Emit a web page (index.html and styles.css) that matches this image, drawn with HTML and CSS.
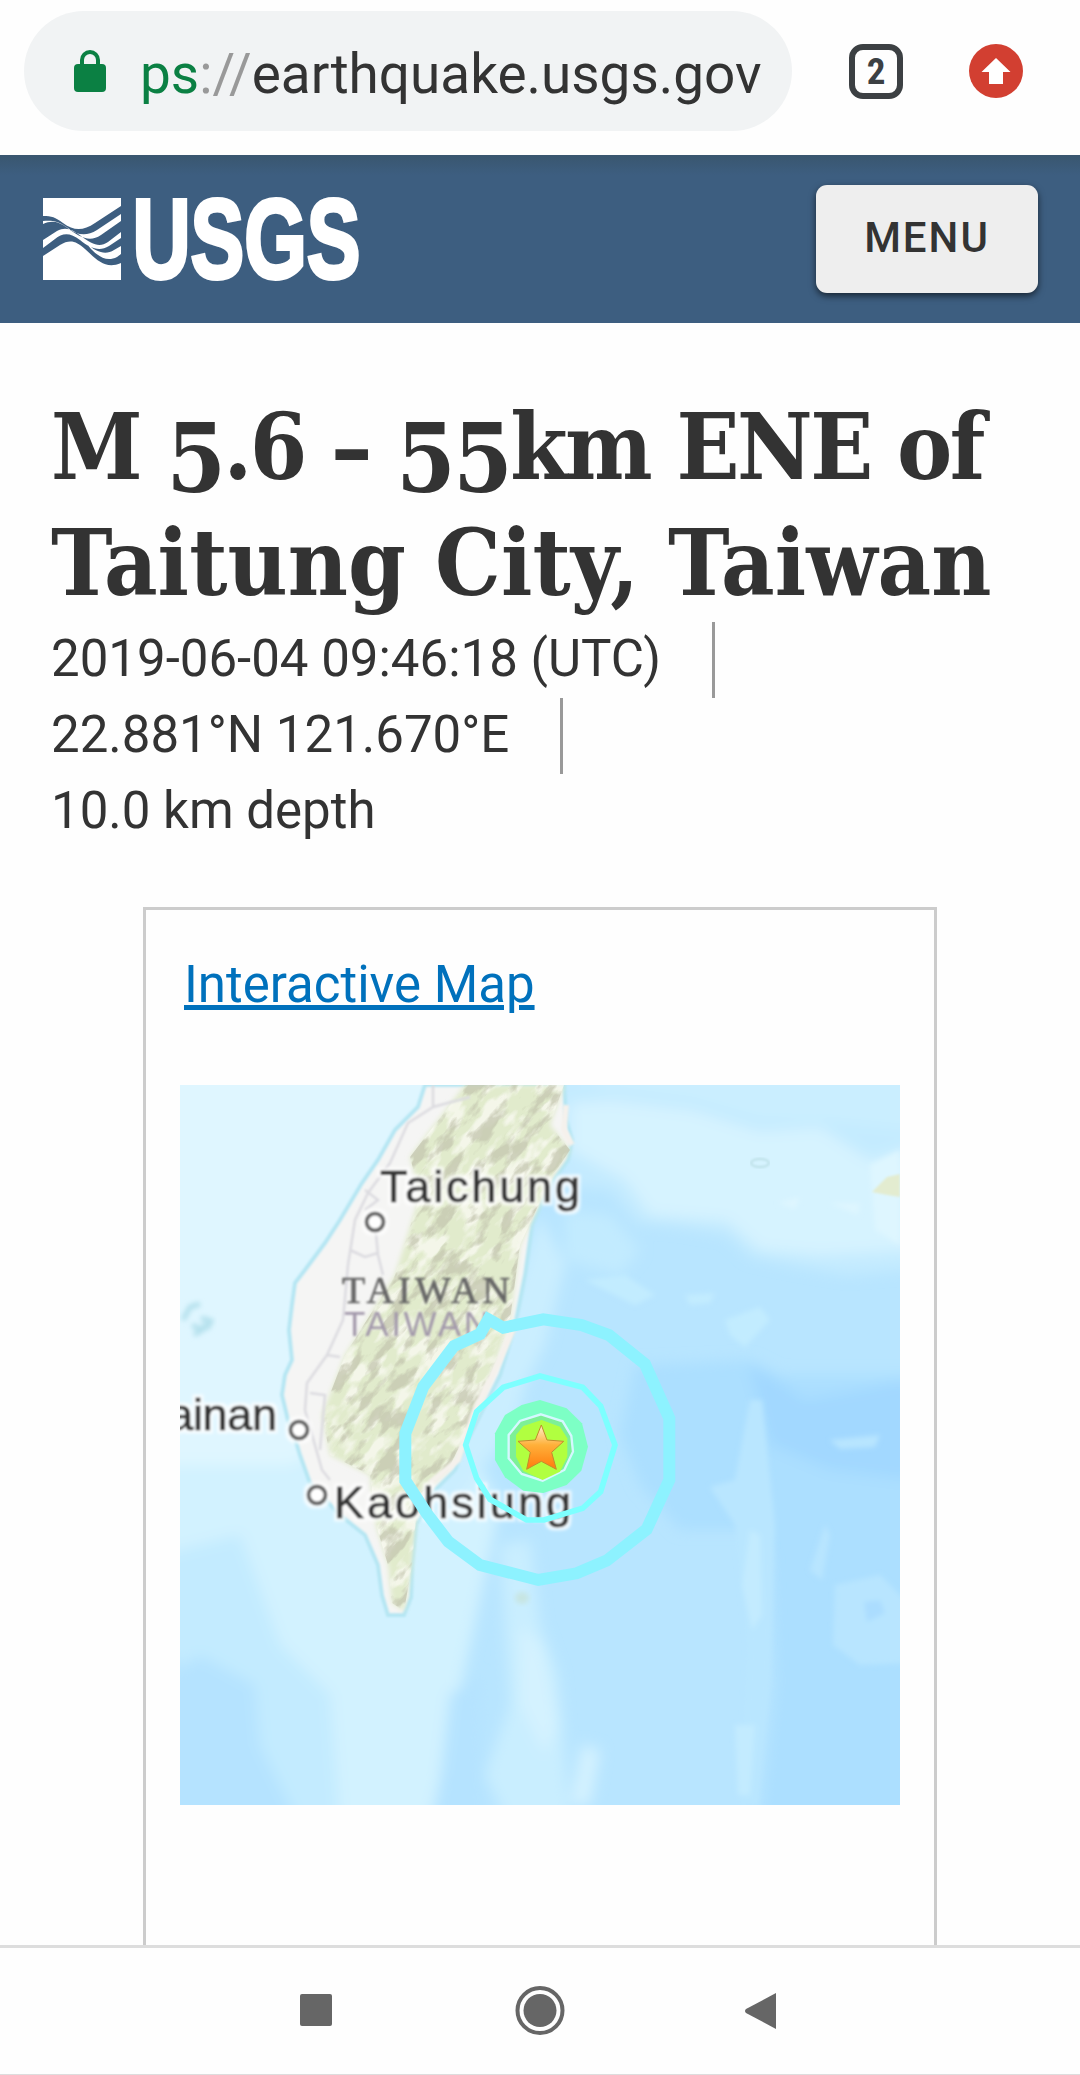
FILE: index.html
```html
<!DOCTYPE html>
<html lang="en">
<head>
<meta charset="utf-8">
<title>M 5.6 - 55km ENE of Taitung City, Taiwan</title>
<link rel="stylesheet" href="styles.css">
</head>
<body>
<div class="browser-bar">
  <div class="omnibox">
    <svg class="lock" viewBox="0 0 32 42"><path d="M8 17V10a8 8 0 0 1 16 0v7" fill="none" stroke="#0b8043" stroke-width="4"/><rect y="14" width="32" height="28" rx="4" fill="#0b8043"/></svg>
    <div class="url"><span class="secure">ps</span><span class="sep">://</span>earthquake.usgs.gov</div>
  </div>
  <div class="tabs">2</div>
  <svg class="update" viewBox="0 0 54 54"><circle cx="27" cy="27" r="27" fill="#d23f31"/><path d="M27 14 12.500 28h7.500v12h14V28h7.500z" fill="#fff"/></svg>
</div>
<header class="site-header">
  <svg class="logo" viewBox="0 0 320 84">
    <path fill="#fff" d="M0 1H78V9L52 26C40 34 31 34 20 26 12 20 9 19 0 19z"/>
    <path fill="#fff" d="M0 27C9 23 16 25 23 30 37 40 46 46 58 38L78 24V17L54 33C43 40 34 38 25 31 16 24 8 23 0 24zM0 43 14 34C23 29 30 33 38 39 49 47 56 51 65 45L78 35V41L66 49C56 55 47 51 37 43 27 35 19 36 12 42L0 51zM43 46C54 56 63 58 71 53L78 49V57L74 60C64 65 56 60 48 52z"/>
    <path fill="#fff" d="M0 59 17 48C27 42 33 44 42 52 53 62 62 73 78 66V83H0z"/>
    <text class="logo-text" x="89.500" y="80.500" textLength="228" lengthAdjust="spacingAndGlyphs">USGS</text>
  </svg>
  <button class="menu">MENU</button>
</header>
<main class="content">
  <h1><span class="line line-a">M <span class="old">5</span>.6 – <span class="old">55</span>km ENE of</span><span class="line line-b">Taitung City, Taiwan</span></h1>
  <ul class="meta">
    <li><span>2019-06-04 09:46:18 (UTC)</span></li>
    <li><span>22.881°N 121.670°E</span></li>
    <li>10.0 km depth</li>
  </ul>
  <section class="card">
    <a class="map-link" href="#">Interactive Map</a>
    <svg class="map" viewBox="0 0 720 720">
      <defs>
        <filter id="soft" x="-20%" y="-20%" width="140%" height="140%"><feGaussianBlur stdDeviation="7"/></filter>
        <filter id="edge" x="-20%" y="-20%" width="140%" height="140%"><feGaussianBlur stdDeviation="2.500"/></filter>
        <filter id="label" x="-5%" y="-20%" width="110%" height="140%"><feGaussianBlur stdDeviation="0.800"/></filter>
        <filter id="halo" x="-5%" y="-20%" width="110%" height="140%">
          <feMorphology in="SourceAlpha" operator="dilate" radius="3" result="fat"/>
          <feGaussianBlur in="fat" stdDeviation="1.500" result="glow"/>
          <feColorMatrix in="glow" values="0 0 0 0 1  0 0 0 0 1  0 0 0 0 1  0 0 0 .75 0" result="white"/>
          <feGaussianBlur in="SourceGraphic" stdDeviation="0.800" result="ink"/>
          <feMerge><feMergeNode in="white"/><feMergeNode in="ink"/></feMerge>
        </filter>
        <filter id="ridges" x="0" y="0" width="100%" height="100%">
          <feTurbulence type="fractalNoise" baseFrequency="0.032 0.080" numOctaves="4" seed="8"/>
          <feColorMatrix values="0 0 0 0 0.540  0 0 0 0 0.550  0 0 0 0 0.420  6 0 0 0 -3"/>
        </filter>
        <filter id="meadow" x="0" y="0" width="100%" height="100%">
          <feTurbulence type="fractalNoise" baseFrequency="0.035 0.070" numOctaves="3" seed="3"/>
          <feColorMatrix values="0 0 0 0 0.970  0 0 0 0 0.965  0 0 0 0 0.920  0 5 0 0 -2.300"/>
        </filter>
        <linearGradient id="star" x1="0" y1="0" x2="0" y2="1"><stop offset="0" stop-color="#fff3cf"/><stop offset=".45" stop-color="#ffb03a"/><stop offset="1" stop-color="#ff7a0c"/></linearGradient>
        <path id="island" d="M245 0 238 22 215 45 198 75 182 98 160 135 145 158 125 185 115 198 112 220 109 245 112 275 105 290 102 310 108 335 114 350 120 370 130 398 160 430 185 450 198 480 202 510 208 530 224 530 231 512 232 480 236 440 250 410 275 385 285 360 300 330 320 290 335 240 345 190 352 140 370 100 388 75 392 55 386 35 384 0z"/>
        <path id="hills" d="M285 0 230 72 240 110 215 190 165 270 142 330 150 370 190 390 196 440 208 480 212 518 224 526 232 480 238 410 268 385 285 350 300 320 330 235 340 160 370 95 390 65 370 40 384 0z"/>
        <clipPath id="hill-clip"><use href="#hills"/></clipPath>
      </defs>
      <rect width="720" height="720" fill="#b8e5ff"/>
      <g filter="url(#soft)">
        <path fill="#dff6ff" d="M-20-20H300L220 300 110 390-20 390z"/>
        <path fill="#d2f2ff" d="M-20 380H110L260 300 320 420 290 560 250 740H140L110 640 80 530 20 490-20 520z"/>
        <path fill="#c3ebff" d="M-20 470 60 450 100 560 150 610 160 740H100L60 600-20 570z"/>
        <path fill="#b5e3ff" d="M-20 600 20 570 75 600 80 660 120 740H-20zM270 610 300 590 305 740H255z"/>
        <path fill="#c4ebff" d="M370-20H740V184L667 190 613 181 570 172 547 150 500 142 457 138 430 105 380 100z"/>
        <path fill="#d6f3ff" d="M390 18 430 15 513 25 580 46 640 42 690 75 740 60V165L640 170 580 165 547 136 470 130 445 95 390 65z"/>
        <path fill="#caeeff" d="M395-10H740V45L640 35 580 35 513 15 430 5z"/>
        <path fill="#caeeff" d="M360 130 385 180 365 260 345 300 335 340 290 400 270 430 250 410 310 280z"/>
        <path fill="#c2ebff" d="M385 125 430 130 460 165 440 190 385 175z"/>
        <path fill="#acdfff" d="M455 280 570 275 600 290 740 290V740H580L595 600 590 470 570 445 500 445 460 400 440 350z"/>
        <path fill="#a2d8ff" d="M568 280 590 290 625 315 730 295V395L650 385 590 360z"/>
        <path fill="#c9eeff" d="M320 460 350 455 360 540 378 590 390 740H330L305 690 330 620z"/>
        <path fill="#d4f2ff" d="M340 540 362 560 378 640 365 670 340 620zM402 660 420 665 410 720H390z"/>
      </g>
      <g filter="url(#edge)">
        <path fill="#b9e6ff" d="M570 315 582 315 595 440 590 600 578 720H560L568 560 555 440 530 402 555 395z"/>
        <path fill="#c3ebff" d="M570 445 580 450 582 530 572 545 562 500zM555 640 575 640 570 710H558z"/>
        <path fill="#c2ecff" d="M545 235 580 222 590 235 565 262 550 250zM505 210 535 208 530 218 510 220zM405 195 445 190 475 210 455 220z"/>
        <path fill="#b8e5ff" d="M655 500 700 490 730 520V578L680 580 653 560zM630 485 645 440 650 450 642 495zM650 355 700 350 695 362 660 364z"/>
        <path fill="#abddff" d="M684 517 700 515 705 528 687 537z"/>
        <path fill="#def6ff" d="M690 80 720 65V160L695 145zM598 118 620 112 615 124zM650 118 680 118 678 130z"/>
      </g>
      <path fill="#e3ecd0" d="M707 92 720 89V112L707 110 692 107z" filter="url(#label)"/>
      <ellipse cx="580" cy="78" rx="9" ry="4" fill="none" stroke="#bcdfe6" stroke-width="2" filter="url(#label)"/>
      <g fill="none" stroke="#b3e0ec" stroke-width="5" filter="url(#edge)"><path d="M3 235 10 222 20 219M12 240 22 245 14 250M21 233 31 236 28 242 22 240"/></g>
      <ellipse cx="342" cy="513" rx="7" ry="6" fill="#c7e5e2" filter="url(#edge)"/>
      <use href="#island" fill="#f5f5f4" stroke="#b5e6f3" stroke-width="4" filter="url(#label)"/>
      <use href="#hills" fill="#e1ebcc" filter="url(#edge)"/>
      <g clip-path="url(#hill-clip)">
        <rect x="-200" y="-200" width="900" height="900" filter="url(#meadow)" opacity=".7" transform="rotate(-50 260 260)"/>
        <rect x="-200" y="-200" width="900" height="900" filter="url(#ridges)" opacity=".72" transform="rotate(-50 260 260)"/>
      </g>
      <path d="M386 20 384 45 392 60M335 240 320 275 295 325 278 375 250 398" fill="none" stroke="#f5f1ec" stroke-width="6" filter="url(#label)"/>
      <g fill="none" stroke="#dcdbe0" stroke-width="2.500" filter="url(#label)"><path d="M253 0V22L228 38 210 78 188 108 175 135 168 180 163 235 147 270 127 298 125 325 142 385 150 395M195 138 198 170 203 190M170 165 185 172 198 168M185 105 198 115 185 125M147 270 160 272M130 308 145 310 140 365M253 22 290 12"/></g>
      <g class="places" filter="url(#halo)">
        <text x="200" y="116.500" textLength="200">Taichung</text>
        <text x="-34" y="345" textLength="131">Tainan</text>
        <text x="154" y="432.500" textLength="237">Kaohsiung</text>
        <g fill="#fff" stroke="#666" stroke-width="4"><circle cx="195" cy="137" r="8.500"/><circle cx="119" cy="345" r="8.500"/><circle cx="137" cy="410" r="8.500"/></g>
      </g>
      <g class="places" filter="url(#label)">
        <text class="country" x="162" y="218" textLength="168">TAIWAN</text>
        <text class="country-alt" x="164" y="251" textLength="145">TAIWAN</text>
      </g>
      <g transform="translate(200 205) scale(.3333)">
        <path fill="none" stroke="#8df2ff" stroke-width="36" d="M325 88 370 113 490 88 605 105 687 135 795 222 868 385V570L800 718 680 812 590 850 475 870 300 825 205 755 140 670 76 572V430L130 290 222 168 300 132z"/>
        <path fill="none" stroke="#7dffff" stroke-width="17" d="M480 258 608 292 662 348 705 465 662 605 608 655 492 690H440L330 628 290 565 257 465 290 365 370 292z"/>
        <path fill="#7dffc5" d="M480 330 560 355 606 400 624 470 604 542 560 585 490 609 430 602 375 562 345 510V430L375 375 425 345z"/>
        <path fill="#7df097" stroke="#d5f8ff" stroke-width="7" d="M483 373 548 394 574 438 579 485 553 540 488 572 425 552 386 505V435L420 393z"/>
        <path fill="#b1ff40" d="M485 390 540 410 562 445V500L540 545 488 570 430 543 408 500V435L430 408z"/>
        <path fill="url(#star)" stroke="#c28b2d" stroke-width="3" stroke-linejoin="round" d="M484 405 501 450 551 454 515 487 529 538 484 514 440 538 451 487 414 454 466 450z"/>
      </g>
    </svg>
  </section>
</main>
<nav class="system-nav">
  <svg viewBox="0 0 1080 126"><rect x="300" y="46" width="32" height="32" rx="2"/><circle cx="540" cy="62.500" r="16.500"/><circle cx="540" cy="62.500" r="22.500" fill="none" stroke="#666" stroke-width="4"/><path d="M776 45V81L746 65q-2-2 0-4z"/></svg>
</nav>
</body>
</html>
```
FILE: styles.css
```css
* { box-sizing: border-box; }
body {
  margin: 0;
  width: 1080px;
  height: 2075px;
  display: flex;
  flex-direction: column;
  overflow: hidden;
  background: #fefefe;
  color: #333;
  font-family: Roboto, sans-serif;
}
.browser-bar {
  height: 155px;
  flex: none;
  display: flex;
  align-items: flex-start;
  padding: 11px 57px 0 24px;
}
.omnibox {
  width: 768px;
  height: 120px;
  border-radius: 60px;
  background: #f1f3f4;
  display: flex;
  align-items: center;
  padding-left: 50px;
}
.lock { width: 32px; height: 42px; margin-right: 34px; }
.url { font-size: 54.900px; line-height: 70px; white-space: nowrap; padding-top: 5px; }
.secure { color: #0b8043; }
.sep { color: #999; }
.tabs {
  width: 54px;
  height: 55px;
  margin: 33px 66px 0 57px;
  border: 6px solid #3c4043;
  border-radius: 14px;
  color: #3c4043;
  font: bold 37px/43px "Roboto Condensed", Roboto, sans-serif;
  text-align: center;
}
.update { width: 54px; height: 54px; margin-top: 33px; }
.site-header {
  height: 168px;
  flex: none;
  display: flex;
  justify-content: space-between;
  align-items: flex-start;
  padding: 30px 42px 0 43px;
  background: linear-gradient(#39566f, #3d5e80 20px);
}
.logo { width: 320px; height: 84px; margin-top: 12px; overflow: visible; }
.logo-text { font: bold 114px "Liberation Sans", sans-serif; fill: #fff; stroke: #fff; stroke-width: 4; }
.menu {
  width: 222px;
  height: 108px;
  border: 0;
  border-radius: 11px;
  background: #eee;
  box-shadow: 0 3px 7px rgba(0, 0, 0, .6);
  color: #333;
  font: 500 42px Roboto, sans-serif;
  letter-spacing: 2px;
  padding-bottom: 5px;
}
.content { flex: 1; min-height: 0; overflow: hidden; padding: 66px 52px 0; }
h1 {
  margin: 0;
  font: bold 92px/116px "DejaVu Serif", serif;
  font-stretch: condensed;
}
.line { display: block; height: 116px; white-space: nowrap; margin-left: -1px; }
.line-a { letter-spacing: -2.500px; }
.line-b { letter-spacing: .1px; }
.old { display: inline-block; font-size: 95px; line-height: 1; transform: translateY(13px); }
.meta { margin: 1px 0 0; padding: 0; list-style: none; font-size: 51px; line-height: 76px; }
.meta li { height: 76px; line-height: 74px; margin-left: -1px; }
.meta span { display: inline-block; padding-right: 51px; border-right: 3px solid #999; height: 76px; line-height: 73px; vertical-align: top; }
.card {
  width: 794px;
  height: 1300px;
  margin: 57px auto 0;
  border: 3px solid #ccc;
  padding: 37px 34px 0;
}
.map-link {
  display: block;
  width: max-content;
  margin-left: 4px;
  color: #0071bc;
  font-size: 51px;
  line-height: 76px;
  text-decoration-thickness: 5px;
  text-underline-offset: 3px;
}
.map { display: block; width: 720px; height: 720px; margin-top: 62px; overflow: hidden; }
.places text { font: 45px "Liberation Sans", sans-serif; fill: #333; stroke: #333; stroke-width: 1; }
.places .country { font: 38px "Liberation Serif", serif; fill: #666; stroke: #666; stroke-width: .6; }
.places .country-alt { font-size: 35px; fill: #a298aa; stroke: none; }
.system-nav { height: 130px; flex: none; border-top: 3px solid #ddd; border-bottom: 1px solid #ddd; background: #fefefe; }
.system-nav svg { display: block; width: 1080px; height: 126px; fill: #666; }
```
